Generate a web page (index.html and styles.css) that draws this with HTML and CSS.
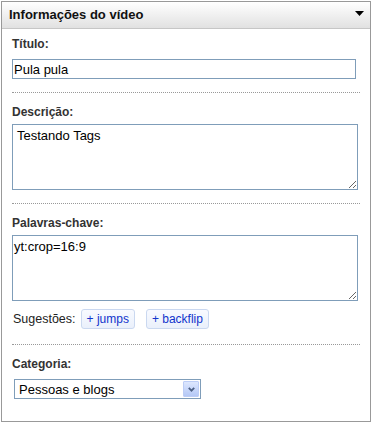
FILE: index.html
```html
<!DOCTYPE html>
<html lang="pt-BR">
<head>
    <meta charset="UTF-8">
    <title>Informações do vídeo</title>
    <link rel="stylesheet" href="styles.css">
</head>
<body>

    <div class="panel">
        <!-- cabeçalho -->
        <div class="panel-header">
            <h2>Informações do vídeo</h2>
            <svg class="toggle" width="9" height="5" viewBox="0 0 9 5"><polygon points="0,0 9,0 4.5,5" fill="#000"/></svg>
        </div>

        <div class="panel-body">
            <div class="field field-title">
                <label class="label">Título:</label>
                <input class="text-input" type="text" value="Pula pula">
            </div>

            <div class="field">
                <label class="label">Descrição:</label>
                <textarea class="text-area desc">Testando Tags</textarea>
            </div>

            <div class="field field-tags">
                <label class="label">Palavras-chave:</label>
                <textarea class="text-area tags">yt:crop=16:9</textarea>
                <div class="suggestions">
                    <span class="suggest-label">Sugestões:</span>
                    <span class="tag">+ jumps</span>
                    <span class="tag">+ backflip</span>
                </div>
            </div>

            <div class="field field-last">
                <label class="label">Categoria:</label>
                <div class="select">
                    <span class="select-value">Pessoas e blogs</span>
                    <span class="select-arrow">
                        <svg width="7" height="5" viewBox="0 0 7 5"><path d="M0.8 0.8 L3.5 3.6 L6.2 0.8" fill="none" stroke="#4d6185" stroke-width="1.8"/></svg>
                    </span>
                </div>
            </div>
        </div>
    </div>

</body>
</html>
```

FILE: styles.css
```css
/* --- base --- */
body {
    margin: 0;
    font-family: "Liberation Sans", Arial, sans-serif;
    color: #333;
    background: #fff;
}

.panel {
    box-sizing: border-box;
    width: 370px;
    height: 421px;
    margin: 1px 0 0 1px;
    border: 1px solid #999;
}

/* --- cabeçalho --- */
.panel-header {
    display: flex;
    align-items: flex-start;
    justify-content: space-between;
    height: 26px;
    padding: 0 6px 0 7px;
    background: linear-gradient(#ffffff, #e1e1e1);
    border-bottom: 1px solid #c6c6c6;
}

.panel-header h2 {
    margin: 0;
    font-size: 13px;
    line-height: 26px;
    font-weight: bold;
    color: #111;
}

.toggle {
    margin-top: 9px;
}

/* --- campos --- */
.panel-body {
    padding: 0 10px;
}

.field {
    padding: 12px 0 13px;
    border-bottom: 1px dotted #999;
}

.field-title {
    padding-top: 8px;
}

.field-tags {
    padding-bottom: 15px;
}

.field-last {
    border-bottom: none;
}

.label {
    display: block;
    font-size: 12px;
    line-height: 14px;
    font-weight: bold;
    color: #333;
    margin-bottom: 5px;
}

.field-title .label,
.field-last .label {
    margin-bottom: 8px;
}

.text-input,
.text-area {
    display: block;
    box-sizing: border-box;
    margin: 0;
    border: 1px solid #7f9db9;
    font-family: "Liberation Sans", Arial, sans-serif;
    font-size: 13px;
    color: #000;
    background: #fff;
    outline: none;
}

.text-input {
    width: 344px;
    height: 20px;
    padding: 0 1px;
}

.text-area {
    width: 346px;
    height: 66px;
    line-height: 15px;
}

.text-area.desc {
    padding: 3px 4px;
}

.text-area.tags {
    padding: 3px 1px;
}

/* --- sugestões --- */
.suggestions {
    display: flex;
    align-items: center;
    margin-top: 8px;
    font-size: 12.5px;
}

.suggest-label {
    color: #222;
    margin: 0 5px 0 1px;
}

.tag {
    box-sizing: border-box;
    height: 20px;
    line-height: 18px;
    padding: 0 5px;
    margin-right: 11px;
    border: 1px solid #cad8f0;
    border-radius: 3px;
    background: linear-gradient(#f8faff, #eaf0fb);
    color: #1133cc;
    font-size: 12px;
}

/* --- categoria --- */
.select {
    display: flex;
    align-items: center;
    justify-content: space-between;
    box-sizing: border-box;
    width: 187px;
    height: 20px;
    margin-left: 2px;
    padding: 0 1px 0 4px;
    border: 1px solid #7f9db9;
    font-size: 13px;
    color: #000;
}

.select-arrow {
    display: flex;
    align-items: center;
    justify-content: center;
    box-sizing: border-box;
    width: 16px;
    height: 16px;
    border: 1px solid #bccdf6;
    border-radius: 1px;
    background: linear-gradient(#dde7fe, #b4c8f6);
}
```
